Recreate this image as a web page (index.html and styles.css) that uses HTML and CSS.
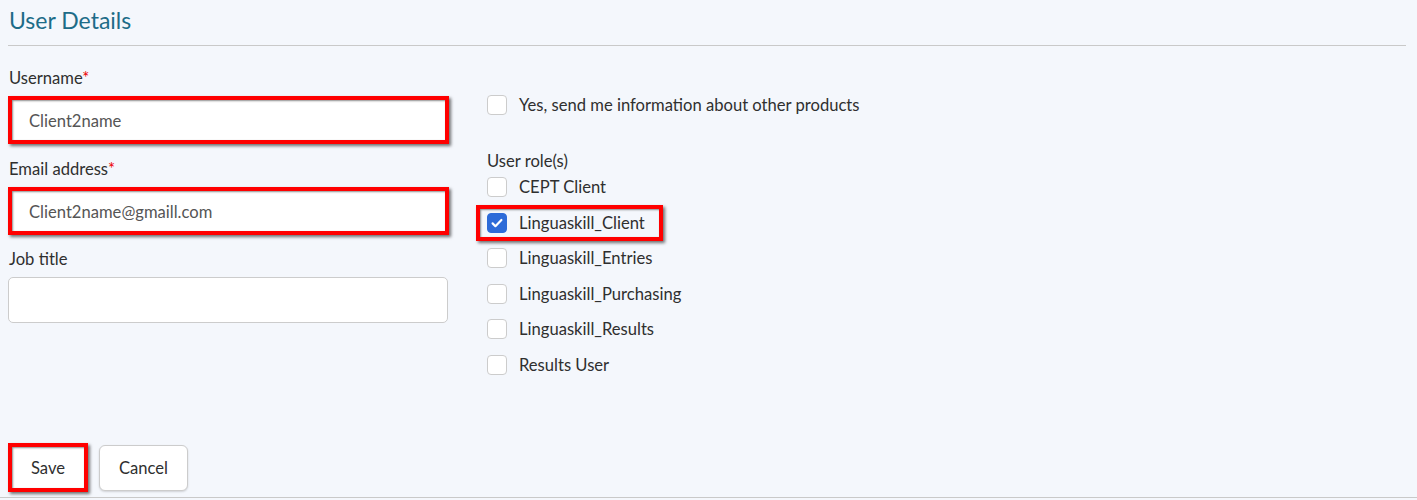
FILE: index.html
```html
<!DOCTYPE html>
<html lang="en">
<head>
    <meta charset="UTF-8">
    <title>User Details</title>
    <link rel="stylesheet" href="styles.css">
</head>
<body>

    <h1 class="page-title">User Details</h1>
    <hr class="rule">

    <div class="form-grid">
        <div class="col-left">
            <label class="field-label">Username<span class="req">*</span></label>
            <input type="text" class="field marked" value="Client2name">

            <label class="field-label">Email address<span class="req">*</span></label>
            <input type="text" class="field marked" value="Client2name@gmaill.com">

            <label class="field-label job">Job title</label>
            <input type="text" class="field plain">
        </div>

        <div class="col-right">
            <div class="check-row first">
                <span class="box"></span>
                <span class="check-text">Yes, send me information about other products</span>
            </div>

            <div class="roles-label">User role(s)</div>
            <div class="check-row">
                <span class="box"></span>
                <span class="check-text">CEPT Client</span>
            </div>
            <div class="check-row marked-row">
                <span class="box checked">
                    <svg width="16" height="16" viewBox="0 0 16 16"><path d="M3.6 8.4l2.8 2.8L12.4 5" fill="none" stroke="#fff" stroke-width="2.2" stroke-linecap="round" stroke-linejoin="round"/></svg>
                </span>
                <span class="check-text">Linguaskill_Client</span>
            </div>
            <div class="check-row">
                <span class="box"></span>
                <span class="check-text">Linguaskill_Entries</span>
            </div>
            <div class="check-row">
                <span class="box"></span>
                <span class="check-text">Linguaskill_Purchasing</span>
            </div>
            <div class="check-row">
                <span class="box"></span>
                <span class="check-text">Linguaskill_Results</span>
            </div>
            <div class="check-row">
                <span class="box"></span>
                <span class="check-text">Results User</span>
            </div>
        </div>
    </div>

    <div class="actions">
        <button class="btn marked">Save</button>
        <button class="btn cancel">Cancel</button>
    </div>
    <div class="footer-line"></div>

</body>
</html>
```

FILE: styles.css
```css
body {
    background-color: #f4f7fc;
    color: #2f2f2f;
    font-family: Lato, "Open Sans", sans-serif;
    font-size: 16.6px;
    margin: 0;
    padding: 0 11px 0 8px;
    height: 500px;
    overflow: hidden;
}

.page-title {
    margin: 0;
    padding: 6px 0 0 1px;
    font-size: 23px;
    font-weight: normal;
    line-height: 28px;
    color: #1d6c88;
}

.rule {
    border: none;
    border-top: 1px solid #c9c9c9;
    margin: 11px 0 0 0;
}

.form-grid {
    display: grid;
    grid-template-columns: 441px 1fr;
    column-gap: 38px;
}

.col-left {
    display: flex;
    flex-direction: column;
}

.field-label {
    display: block;
    line-height: 20px;
    margin: 15px 0 8px 1px;
}

.col-left .field-label:first-child {
    margin-top: 22px;
}

.field-label.job {
    margin-top: 14px;
}

.req {
    color: #e00;
}

.field {
    box-sizing: border-box;
    width: 441px;
    font-family: inherit;
    font-size: 16.6px;
    color: #555;
    background: #fff;
    outline: none;
}

.field.marked {
    height: 48px;
    border: 4px solid #f00;
    padding: 2px 0 0 17px;
    box-shadow: 2px 2px 3px rgba(0, 0, 0, 0.55), inset 1px 1px 2px rgba(0, 0, 0, 0.45);
}

.field.plain {
    width: 440px;
    height: 46px;
    border: 1px solid #ccc;
    border-radius: 5px;
}

.col-right {
    padding-top: 49px;
}

.check-row {
    display: flex;
    align-items: center;
    gap: 12px;
    height: 20px;
    margin-bottom: 15.5px;
    line-height: 20px;
}

.check-row.first {
    margin-bottom: 0;
}

.box {
    box-sizing: border-box;
    width: 20px;
    height: 20px;
    flex: none;
    background: #fff;
    border: 1px solid #ccc;
    border-radius: 4px;
    display: flex;
    align-items: center;
    justify-content: center;
}

.box.checked {
    background: #2d6bd8;
    border-color: #2d6bd8;
}

.marked-row {
    position: relative;
}

.marked-row::before {
    content: "";
    position: absolute;
    left: -11px;
    top: -8px;
    width: 187px;
    height: 36px;
    box-sizing: border-box;
    border: 4px solid #f00;
    box-shadow: 2px 2px 3px rgba(0, 0, 0, 0.55), inset 1px 1px 2px rgba(0, 0, 0, 0.45);
}

.roles-label {
    margin: 36px 0 6px 0;
    line-height: 20px;
}

.actions {
    display: flex;
    align-items: center;
    gap: 11px;
    margin-top: 53px;
}

.btn {
    box-sizing: border-box;
    font-family: inherit;
    font-size: 16.6px;
    color: #2f2f2f;
    background: #fff;
    cursor: pointer;
}

.btn.marked {
    width: 80px;
    height: 49px;
    border: 4px solid #f00;
    box-shadow: 2px 2px 3px rgba(0, 0, 0, 0.55), inset 1px 1px 2px rgba(0, 0, 0, 0.45);
}

.btn.cancel {
    width: 89px;
    height: 46px;
    border: 1px solid #ccc;
    border-radius: 6px;
    box-shadow: 0 1px 2px rgba(0, 0, 0, 0.15);
}

.footer-line {
    border-top: 1px solid #c9c9c9;
    margin: 5px -11px 0 -8px;
}
```
